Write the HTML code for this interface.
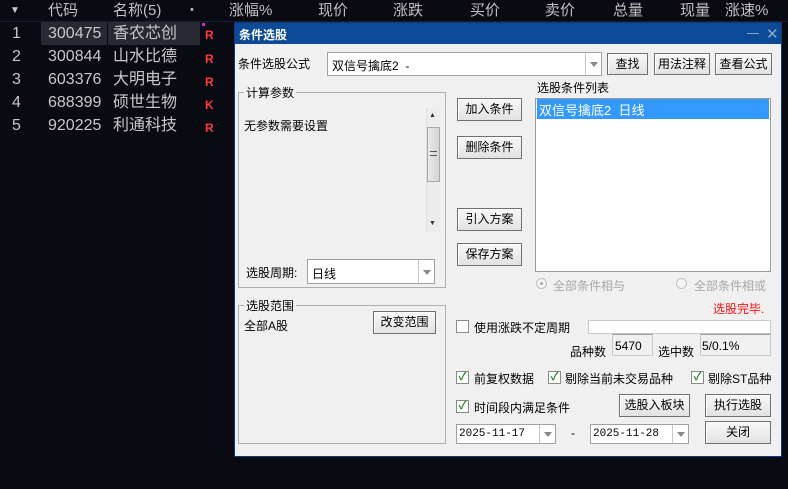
<!DOCTYPE html>
<html><head><meta charset="utf-8"><style>
*{margin:0;padding:0;box-sizing:border-box}
body{width:788px;height:489px;background:#0a0a12;position:relative;overflow:hidden;font-family:"Liberation Sans","Noto Sans CJK SC",sans-serif}
.a{position:absolute;white-space:nowrap}
.h{color:#c0c0c0;font-size:15px;top:0;height:21px;line-height:21px}
.r{color:#c8c8c8;font-size:16px;height:23px;line-height:23px}
.R{color:#ff3a3a;font-size:12px;font-weight:bold}
#dlg{position:absolute;left:234px;top:22px;width:548px;height:435px;background:#f0f0f0;border:1px solid #0a3a7a}
#dlg .a{font-size:12px;color:#000}
.btn{position:absolute;background:linear-gradient(#f8f8f8,#e2e2e2);border:1px solid #707070;box-shadow:inset 1px 1px 0 #fff;font-size:12px;text-align:center;color:#000}
.inp{position:absolute;background:#fff;border:1px solid #a0a0a0}
.dd{position:absolute;right:0;top:0;bottom:0;width:16px;border-left:1px solid #c8c8c8}
.dd:after{content:"";position:absolute;left:4px;top:50%;margin-top:-2px;border:4px solid transparent;border-top:5px solid #888;border-bottom:0}
.grp{position:absolute;border:1px solid #b0b0b0}
.cb{position:absolute;width:13px;height:13px;border:1px solid #8a8a8a;background:#fff;font-size:11px;line-height:11px;text-align:center;color:#1a8a1a;font-weight:bold}
</style></head><body>
<div class="a" style="left:10px;top:5px;color:#ccc;font-size:10px">▼</div>
<div class="a h" style="left:48px">代码</div>
<div class="a h" style="left:113px">名称(5)</div>
<div class="a h" style="left:190px;font-size:11px">•</div>
<div class="a h" style="left:229px">涨幅%</div>
<div class="a h" style="left:318px">现价</div>
<div class="a h" style="left:393px">涨跌</div>
<div class="a h" style="left:470px">买价</div>
<div class="a h" style="left:545px">卖价</div>
<div class="a h" style="left:613px">总量</div>
<div class="a h" style="left:680px">现量</div>
<div class="a h" style="left:725px">涨速%</div>
<div class="a" style="left:0;top:21px;width:788px;height:1px;background:#1c1c2a"></div>
<div class="a" style="left:41px;top:22px;width:66px;height:23px;background:#272a33"></div>
<div class="a" style="left:108px;top:22px;width:92px;height:23px;background:#272a33"></div>
<div class="a" style="left:202px;top:23px;width:3px;height:3px;background:#e020e0"></div>
<div class="a r" style="left:12px;top:22px">1</div><div class="a r" style="left:48px;top:22px">300475</div><div class="a r" style="left:113px;top:22px">香农芯创</div><div class="a R" style="left:205px;top:28px">R</div>
<div class="a r" style="left:12px;top:45px">2</div><div class="a r" style="left:48px;top:45px">300844</div><div class="a r" style="left:113px;top:45px">山水比德</div><div class="a R" style="left:205px;top:52px">R</div>
<div class="a r" style="left:12px;top:68px">3</div><div class="a r" style="left:48px;top:68px">603376</div><div class="a r" style="left:113px;top:68px">大明电子</div><div class="a R" style="left:205px;top:75px">R</div>
<div class="a r" style="left:12px;top:91px">4</div><div class="a r" style="left:48px;top:91px">688399</div><div class="a r" style="left:113px;top:91px">硕世生物</div><div class="a R" style="left:205px;top:98px">K</div>
<div class="a r" style="left:12px;top:114px">5</div><div class="a r" style="left:48px;top:114px">920225</div><div class="a r" style="left:113px;top:114px">利通科技</div><div class="a R" style="left:205px;top:121px">R</div>

<div id="dlg">
<div style="position:absolute;left:0;top:0;width:546px;height:21px;background:#0c4a98"></div>
<div class="a" style="left:4px;top:3px;color:#fff!important;font-weight:bold;font-size:12px">条件选股</div>
<div class="a" style="left:512px;top:10px;width:12px;height:1px;background:#8aa8d0"></div>
<div class="a" style="left:531px;top:2px;color:#8aa8d0!important;font-size:15px">✕</div>
</div>
<div class="a" style="left:238px;top:55px;font-size:12px">条件选股公式</div>
<div class="inp" style="left:327px;top:52px;width:275px;height:24px"><span class="a" style="left:4px;top:4px;font-size:12px">双信号擒底2&nbsp;&nbsp;-</span><div class="dd"></div></div>
<div class="btn" style="left:607px;top:53px;width:41px;height:22px;line-height:20px">查找</div>
<div class="btn" style="left:654px;top:53px;width:56px;height:22px;line-height:20px">用法注释</div>
<div class="btn" style="left:715px;top:53px;width:57px;height:22px;line-height:20px">查看公式</div>

<div class="grp" style="left:238px;top:92px;width:208px;height:196px"></div>
<div class="a" style="left:244px;top:84px;background:#f0f0f0;padding:0 2px;font-size:12px">计算参数</div>
<div class="a" style="left:244px;top:117px;font-size:12px">无参数需要设置</div>
<div class="a" style="left:426px;top:108px;width:15px;height:124px;background:#ececec;border-left:1px solid #e0e0e0"></div>
<div class="a" style="left:429px;top:112px;font-size:7px;color:#333">▲</div>
<div class="a" style="left:429px;top:220px;font-size:7px;color:#333">▼</div>
<div class="a" style="left:427px;top:127px;width:13px;height:55px;background:linear-gradient(90deg,#e8e8e8,#d4d4d4);border:1px solid #a8a8a8"></div>
<div class="a" style="left:430px;top:151px;width:7px;height:5px;border-top:1px solid #555;border-bottom:1px solid #555"></div>
<div class="a" style="left:246px;top:264px;font-size:12px">选股周期:</div>
<div class="inp" style="left:307px;top:259px;width:128px;height:25px"><span class="a" style="left:4px;top:5px;font-size:12px">日线</span><div class="dd"></div></div>

<div class="grp" style="left:238px;top:305px;width:208px;height:139px"></div>
<div class="a" style="left:244px;top:297px;background:#f0f0f0;padding:0 2px;font-size:12px">选股范围</div>
<div class="a" style="left:244px;top:317px;font-size:12px">全部A股</div>
<div class="btn" style="left:373px;top:311px;width:63px;height:23px;line-height:21px">改变范围</div>

<div class="btn" style="left:457px;top:98px;width:65px;height:23px;line-height:21px">加入条件</div>
<div class="btn" style="left:457px;top:136px;width:65px;height:23px;line-height:21px">删除条件</div>
<div class="btn" style="left:457px;top:208px;width:65px;height:23px;line-height:21px">引入方案</div>
<div class="btn" style="left:457px;top:243px;width:65px;height:23px;line-height:21px">保存方案</div>

<div class="a" style="left:537px;top:79px;font-size:12px">选股条件列表</div>
<div class="inp" style="left:535px;top:98px;width:236px;height:174px;border-color:#999"></div>
<div class="a" style="left:537px;top:99px;width:232px;height:20px;background:#3399ff;color:#fff;font-size:13px;padding:1px 0 0 2px">双信号擒底2&nbsp;&nbsp;日线</div>

<div class="a" style="left:536px;top:278px;width:11px;height:11px;border-radius:50%;border:1px solid #c0c0c0;background:#f4f4f4"></div>
<div class="a" style="left:540px;top:282px;width:3px;height:3px;border-radius:50%;background:#aaa"></div>
<div class="a" style="left:553px;top:277px;font-size:12px;color:#a8a8a8">全部条件相与</div>
<div class="a" style="left:676px;top:278px;width:11px;height:11px;border-radius:50%;border:1px solid #c0c0c0;background:#f4f4f4"></div>
<div class="a" style="left:694px;top:277px;font-size:12px;color:#a8a8a8">全部条件相或</div>
<div class="a" style="left:713px;top:300px;font-size:12px;color:#ff1010">选股完毕.</div>

<div class="cb" style="left:456px;top:320px"></div>
<div class="a" style="left:474px;top:319px;font-size:12px">使用涨跌不定周期</div>
<div class="inp" style="left:588px;top:320px;width:183px;height:14px;border-color:#c8c8c8"></div>
<div class="a" style="left:570px;top:343px;font-size:12px">品种数</div>
<div class="a" style="left:612px;top:334px;width:41px;height:22px;border:1px solid #c8c8c8;border-top-color:#a0a0a0;font-size:12px;padding:4px 0 0 2px">5470</div>
<div class="a" style="left:658px;top:343px;font-size:12px">选中数</div>
<div class="a" style="left:700px;top:334px;width:71px;height:22px;border:1px solid #c8c8c8;border-top-color:#a0a0a0;font-size:12px;padding:4px 0 0 1px">5/0.1%</div>

<div class="cb" style="left:456px;top:371px">✓</div><div class="a" style="left:474px;top:370px;font-size:12px">前复权数据</div>
<div class="cb" style="left:548px;top:371px">✓</div><div class="a" style="left:565px;top:370px;font-size:12px">剔除当前未交易品种</div>
<div class="cb" style="left:691px;top:371px">✓</div><div class="a" style="left:708px;top:370px;font-size:12px">剔除ST品种</div>
<div class="cb" style="left:456px;top:400px">✓</div><div class="a" style="left:474px;top:399px;font-size:12px">时间段内满足条件</div>
<div class="btn" style="left:619px;top:394px;width:71px;height:23px;line-height:21px">选股入板块</div>
<div class="btn" style="left:705px;top:394px;width:66px;height:23px;line-height:21px">执行选股</div>
<div class="btn" style="left:705px;top:421px;width:66px;height:23px;line-height:21px">关闭</div>
<div class="inp" style="left:456px;top:424px;width:100px;height:20px"><span class="a" style="left:2px;top:3px;font-size:11px;font-family:'Liberation Mono',monospace">2025-11-17</span><div class="dd"></div></div>
<div class="a" style="left:571px;top:426px;font-size:12px">-</div>
<div class="inp" style="left:590px;top:424px;width:99px;height:20px"><span class="a" style="left:2px;top:3px;font-size:11px;font-family:'Liberation Mono',monospace">2025-11-28</span><div class="dd"></div></div>
</body></html>
